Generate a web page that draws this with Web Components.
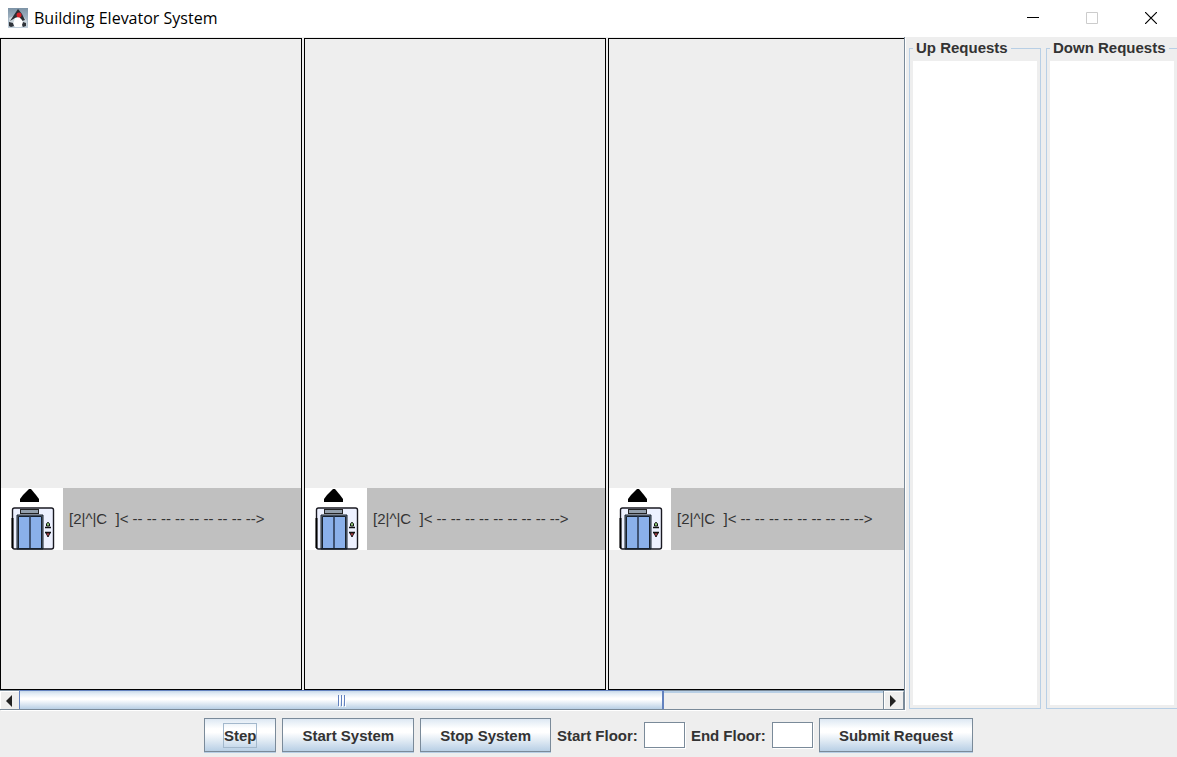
<!DOCTYPE html>
<html lang="en">
<head>
<meta charset="utf-8">
<title>Building Elevator System</title>
<style>
html,body{margin:0;height:100%}
body{background:#eee;color:#333;font:15px/17px "Liberation Sans",Arial,sans-serif;overflow:hidden}
</style>
</head>
<body>
<elevator-app></elevator-app>
<script>
const define = (name, html) => customElements.define(name, class extends HTMLElement {
  constructor() {
    super();
    this.attachShadow({mode: 'open'}).innerHTML = html;
  }
});

define('title-bar', `
<style>
:host{box-sizing:border-box;display:flex;align-items:center;gap:6px;height:37px;padding-bottom:1px;background:#fff;color:#000;font:16px/22px "Open Sans","Segoe UI",sans-serif}
.logo{margin-left:8px}
h1{font:inherit;margin:0;flex:1}
button{width:53px;height:36px;padding:0;border:0;background:none;display:grid;place-items:center}
svg{display:block}
</style>
<svg class="logo" width="20" height="20" viewBox="0 0 20 20" aria-hidden="true">
  <defs><linearGradient id="g" x2="0" y2="1"><stop stop-color="#7d93a6"/><stop offset="1" stop-color="#c3d0db"/></linearGradient></defs>
  <rect width="20" height="20" fill="url(#g)"/>
  <path d="M1 10l7-3 8 2 3 4v5H2z" fill="#cbd5dc"/>
  <path d="M10 1l4 5 3 6-3 1-3-4-4 1-5 3 4-6z" fill="#2b2e34"/>
  <path d="M7 10l4-1 3 3 2 5-3 2H7l-2-3z" fill="#fff"/>
  <path d="M1 14l4 1 1 3-3 1-2-1zM15 14l3 1v3l-3 1-1-2z" fill="#30343a"/>
  <circle cx="11" cy="7" r="2.500" fill="#d8232a"/>
</svg>
<h1><slot></slot></h1>
<button aria-label="Minimize"><svg width="12" height="12"><path d="M0 5.500h12" stroke="#000"/></svg></button>
<button aria-label="Maximize" disabled><svg width="12" height="12"><path d="M.5 .5h11v11H.5z" fill="none" stroke="#ccc"/></svg></button>
<button aria-label="Close"><svg width="12" height="12"><path d="M0 0l12 12M12 0L0 12" stroke="#000" stroke-width="1.200"/></svg></button>
`);

define('elevator-icon', `
<style>:host{display:block;background:#fff}svg{display:block}</style>
<svg width="62" height="62" viewBox="0 0 62 62" aria-hidden="true">
  <path d="M28 1h2l5 6 3 4v3H19v-3l3-4z" fill="#000"/>
  <rect x="11.500" y="20" width="41" height="41" rx="2" fill="#edf1ff" stroke="#1a1a22" stroke-width="1.400"/>
  <path d="M11.500 30v30" stroke="#000" stroke-width="2"/>
  <rect x="19.500" y="21.500" width="18" height="4" fill="#929eab" stroke="#222"/>
  <path d="M16 61V27h26v34z" fill="#6f7c8d" stroke="#17202c"/>
  <path d="M18 60V29h22v31z" fill="#8ab0ea"/>
  <path d="M17.500 61V28.500h23V61" fill="none" stroke="#17202c"/>
  <path d="M29 28v33" stroke="#26344d" stroke-width="1.500"/>
  <path d="M16 60.500h26" stroke="#17202c"/>
  <path d="M45.500 38v-2l1-1.500h1l1 1.500v2z" fill="#8ecb78" stroke="#111"/>
  <path d="M44 39.500h6M44 44.500h6" stroke="#111" stroke-width="1.500"/>
  <path d="M45 45h4l-2 4z" fill="#d14550" stroke="#111"/>
</svg>
`);

define('elevator-shaft', `
<style>
:host{box-sizing:border-box;display:flex;flex-direction:column;flex:none;width:302px;border:1px solid #000;height:100%}
.above{flex:449}
.below{flex:139}
.car{display:flex;align-items:center;height:62px;background:#c0c0c0}
.label{padding:0 0 2px 6px;white-space:pre}
</style>
<div class="above"></div>
<div class="car"><elevator-icon></elevator-icon><span class="label"><slot></slot></span></div>
<div class="below"></div>
`);

define('scroll-bar', `
<style>
:host{box-sizing:border-box;display:flex;height:20px;border-top:1px solid #7a8a99;border-bottom:1px solid #7a8a99;background:#eee}
button{box-sizing:border-box;width:19px;padding:0 3px 0 0;border:0;background:#eee;border-top:1px solid #fff;border-left:1px solid #fff;display:grid;place-items:center}
.end{width:20px;border-right:1px solid #7a8a99}
.track{flex:1;display:flex;border-right:1px solid #7a8a99;box-shadow:inset 0 2px #b8cfe5}
.thumb{flex:645;box-sizing:border-box;margin-top:-1px;border:solid #6382bf;border-width:1px 2px 0 1px;display:flex;justify-content:center;align-items:center;gap:2px;
  background:linear-gradient(#c8d9ea,#e4edf6 15%,#fff 40%,#fff 48%,#b8cfe5)}
.thumb i{width:1px;height:11px;background:#6382bf;box-shadow:1px 1px #fff}
.rest{flex:220}
</style>
<button aria-label="Scroll left"><svg width="6" height="12"><path d="M6 0v12L0 6z" fill="#222"/></svg></button>
<div class="track"><div class="thumb"><i></i><i></i><i></i></div><div class="rest"></div></div>
<button class="end" aria-label="Scroll right"><svg width="6" height="12"><path d="M0 0v12l6-6z" fill="#222"/></svg></button>
`);

define('shaft-view', `
<style>
:host{box-sizing:border-box;display:flex;flex-direction:column;flex:1;min-width:0;border-right:1px solid #7a8a99;padding-top:1px;box-shadow:1px 1px #fff}
.view{flex:1;min-height:0;display:flex;gap:2px;overflow:hidden}
</style>
<div class="view"><slot></slot></div>
<scroll-bar></scroll-bar>
`);

define('request-list', `
<style>
:host{display:flex;flex:none;width:132px}
fieldset{box-sizing:border-box;width:100%;min-width:0;margin:0;padding:5px 3px 3px;border:1px solid #b8cfe5;display:flex}
legend{font-weight:bold;line-height:16px;padding:0 3px;white-space:nowrap}
ul{flex:1;margin:0;padding:0;list-style:none;background:#fff}
</style>
<fieldset><legend><slot></slot></legend><ul></ul></fieldset>
`);

define('metal-button', `
<style>
:host{display:block}
button{box-sizing:border-box;height:34px;padding:0 19px;border:1px solid #7a8a99;box-shadow:0 1px #b8cfe5;color:#333;font:inherit;font-weight:bold;display:block;
  background:linear-gradient(#dde8f3,#fff 30%,#fff 42%,#b8cfe5)}
span{display:block;padding:3px 0}
:host([focused]) span{outline:1px solid #a3b8cc}
</style>
<button><span><slot></slot></span></button>
`);

define('floor-field', `
<style>
:host{display:block}
label{display:flex;align-items:center;gap:6px;font-weight:bold}
input{box-sizing:border-box;width:41px;height:26px;margin:0;border:1px solid #7a8a99;border-radius:0;background:#fff;box-shadow:1px 1px #fff;font:inherit;padding:2px}
</style>
<label><slot></slot><input type="text"></label>
`);

define('elevator-app', `
<style>
:host{display:flex;flex-direction:column;height:100vh}
main{flex:1;min-height:0;display:flex}
aside{display:flex;gap:5px;width:268px;padding:3px 0 1px 4px;overflow:hidden}
footer{box-sizing:border-box;display:flex;justify-content:center;align-items:center;gap:6px;height:47px;padding-top:3px}
</style>
<title-bar>Building Elevator System</title-bar>
<main>
  <shaft-view>
    <elevator-shaft>[2|^|C  ]&lt; -- -- -- -- -- -- -- -- --&gt;</elevator-shaft>
    <elevator-shaft>[2|^|C  ]&lt; -- -- -- -- -- -- -- -- --&gt;</elevator-shaft>
    <elevator-shaft>[2|^|C  ]&lt; -- -- -- -- -- -- -- -- --&gt;</elevator-shaft>
  </shaft-view>
  <aside>
    <request-list>Up Requests</request-list>
    <request-list>Down Requests</request-list>
  </aside>
</main>
<footer>
  <metal-button focused>Step</metal-button>
  <metal-button>Start System</metal-button>
  <metal-button>Stop System</metal-button>
  <floor-field>Start Floor:</floor-field>
  <floor-field>End Floor:</floor-field>
  <metal-button>Submit Request</metal-button>
</footer>
`);
</script>
</body>
</html>
